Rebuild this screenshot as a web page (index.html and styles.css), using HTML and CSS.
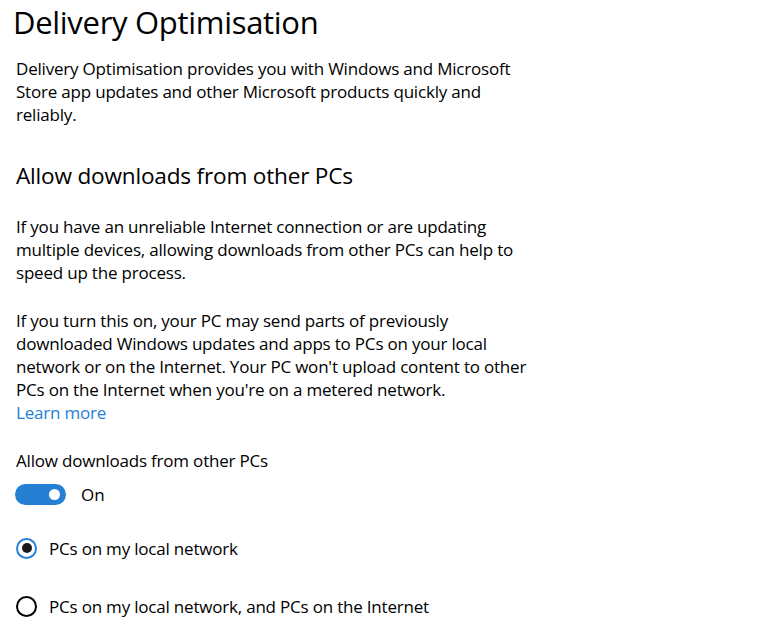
FILE: index.html
```html
<!DOCTYPE html>
<html>
<head>
<meta charset="utf-8">
<link rel="stylesheet" href="styles.css">
</head>
<body>
<div class="page">
  <h1 class="title">Delivery Optimisation</h1>
  <p class="para intro">Delivery Optimisation provides you with Windows and Microsoft Store app updates and other Microsoft products quickly and reliably.</p>
  <h2 class="heading">Allow downloads from other PCs</h2>
  <p class="para p2">If you have an unreliable Internet connection or are updating multiple devices, allowing downloads from other PCs can help to speed up the process.</p>
  <p class="para p3">If you turn this on, your PC may send parts of previously downloaded Windows updates and apps to PCs on your local network or on the Internet. Your PC won't upload content to other PCs on the Internet when you're on a metered network.<br><a class="link" href="#">Learn more</a></p>
  <div class="label">Allow downloads from other PCs</div>
  <div class="toggle-row">
    <span class="toggle"><span class="knob"></span></span>
    <span class="toggle-text">On</span>
  </div>
  <div class="radio-row r1">
    <span class="radio checked"><span class="dot"></span></span>
    <span class="radio-text">PCs on my local network</span>
  </div>
  <div class="radio-row r2">
    <span class="radio"></span>
    <span class="radio-text">PCs on my local network, and PCs on the Internet</span>
  </div>
</div>
</body>
</html>
```

FILE: styles.css
```css
html, body { margin: 0; padding: 0; background: #fff; }
body { font-family: "Open Sans", "Noto Sans", sans-serif; color: #000; }
.page { padding: 0 0 0 16px; width: 520px; }
.title { font-size: 31px; font-weight: 400; margin: 0 0 0 -3px; line-height: 40px; padding-top: 2px; letter-spacing: -0.3px; }
.para { font-size: 17px; line-height: 23px; margin: 0; letter-spacing: -0.2px; }
.intro { margin-top: 15px; }
.heading { font-size: 22.6px; font-weight: 400; margin: 0; line-height: 30px; margin-top: 35px; letter-spacing: -0.2px; }
.p2 { margin-top: 24px; }
.p3 { margin-top: 25px; }
.link { color: #1f81d6; text-decoration: none; }
.label { font-size: 17px; line-height: 23px; margin-top: 25px; letter-spacing: -0.2px; }
.toggle-row { display: flex; align-items: center; margin-top: 10px; height: 24px; }
.toggle { width: 51px; height: 21px; border-radius: 11px; background: #2580d4; position: relative; margin-left: -1px; }
.knob { position: absolute; right: 6px; top: 5px; width: 11px; height: 11px; border-radius: 50%; background: #fff; }
.toggle-text { font-size: 17px; margin-left: 15px; }
.radio-row { display: flex; align-items: center; height: 24px; font-size: 17px; letter-spacing: -0.2px; }
.r1 { margin-top: 30px; }
.r2 { margin-top: 34px; }
.radio { width: 21px; height: 21px; box-sizing: border-box; border: 2px solid #000; border-radius: 50%; display: flex; align-items: center; justify-content: center; }
.radio.checked { border-color: #2580d4; }
.dot { width: 10px; height: 10px; background: #1a1a1a; border-radius: 50%; }
.radio-text { margin-left: 12px; }
```
